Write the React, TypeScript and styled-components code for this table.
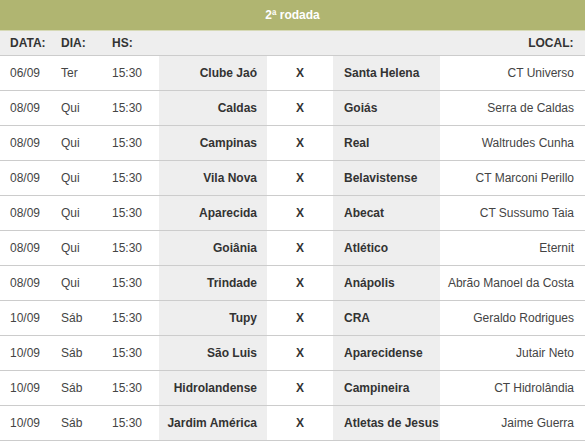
import React from "react";
import styled, { createGlobalStyle } from "styled-components";

const Global = createGlobalStyle`
  html, body { margin: 0; padding: 0; background: #fff; }
  body { font-family: "Liberation Sans", Arial, sans-serif; }
`;

const Table = styled.table`
  width: 585px;
  border-collapse: collapse;
  table-layout: fixed;
  font-family: "Liberation Sans", Arial, sans-serif;
  font-size: 12px;
  color: #333;
`;

const TitleCell = styled.th`
  height: 30px;
  padding: 0;
  background: #b0b571;
  color: #fff;
  font-weight: bold;
  text-align: center;
  border-bottom: 1px solid #d6d9b6;
`;

const HeadRow = styled.tr`
  background: #eee;
`;

const HeadCell = styled.th<{ $align?: string; $pad?: string; $edge?: boolean }>`
  height: 24px;
  padding: ${(p) => p.$pad || "0 0 0 10px"};
  text-align: ${(p) => p.$align || "left"};
  font-weight: bold;
  color: #333;
  border-bottom: 1px solid #ccc;
  border-right: ${(p) => (p.$edge ? "1px solid #555" : "none")};
`;

const Row = styled.tr`
  border-bottom: 1px solid #ccc;
`;

const Cell = styled.td<{ $align?: string; $pad?: string; $bold?: boolean; $shade?: boolean }>`
  height: 34px;
  padding: ${(p) => p.$pad || "0 0 0 10px"};
  text-align: ${(p) => p.$align || "left"};
  font-weight: ${(p) => (p.$bold ? "bold" : "normal")};
  background: ${(p) => (p.$shade ? "#eee" : "transparent")};
  color: ${(p) => (p.$bold ? "#333" : "#444")};
  white-space: nowrap;
  overflow: hidden;
`;

type Game = [string, string, string, string, string, string];

const games: Game[] = [
  ["06/09", "Ter", "15:30", "Clube Jaó", "Santa Helena", "CT Universo"],
  ["08/09", "Qui", "15:30", "Caldas", "Goiás", "Serra de Caldas"],
  ["08/09", "Qui", "15:30", "Campinas", "Real", "Waltrudes Cunha"],
  ["08/09", "Qui", "15:30", "Vila Nova", "Belavistense", "CT Marconi Perillo"],
  ["08/09", "Qui", "15:30", "Aparecida", "Abecat", "CT Sussumo Taia"],
  ["08/09", "Qui", "15:30", "Goiânia", "Atlético", "Eternit"],
  ["08/09", "Qui", "15:30", "Trindade", "Anápolis", "Abrão Manoel da Costa"],
  ["10/09", "Sáb", "15:30", "Tupy", "CRA", "Geraldo Rodrigues"],
  ["10/09", "Sáb", "15:30", "São Luis", "Aparecidense", "Jutair Neto"],
  ["10/09", "Sáb", "15:30", "Hidrolandense", "Campineira", "CT Hidrolândia"],
  ["10/09", "Sáb", "15:30", "Jardim América", "Atletas de Jesus", "Jaime Guerra"],
];

export default function App() {
  return (
    <>
      <Global />
      <Table>
        <colgroup>
          <col style={{ width: 51 }} />
          <col style={{ width: 51 }} />
          <col style={{ width: 57 }} />
          <col style={{ width: 108 }} />
          <col style={{ width: 66 }} />
          <col style={{ width: 107 }} />
          <col style={{ width: 145 }} />
        </colgroup>
        <thead>
          <tr>
            <TitleCell colSpan={7}>2ª rodada</TitleCell>
          </tr>
          <HeadRow>
            <HeadCell>DATA:</HeadCell>
            <HeadCell>DIA:</HeadCell>
            <HeadCell>HS:</HeadCell>
            <HeadCell />
            <HeadCell />
            <HeadCell />
            <HeadCell $align="right" $pad="0 11px 0 0" $edge>
              LOCAL:
            </HeadCell>
          </HeadRow>
        </thead>
        <tbody>
          {games.map((g, i) => (
            <Row key={i}>
              <Cell>{g[0]}</Cell>
              <Cell>{g[1]}</Cell>
              <Cell>{g[2]}</Cell>
              <Cell $shade $bold $align="right" $pad="0 10px 0 0">
                {g[3]}
              </Cell>
              <Cell $bold $align="center" $pad="0">
                X
              </Cell>
              <Cell $shade $bold $pad="0 0 0 11px">
                {g[4]}
              </Cell>
              <Cell $align="right" $pad="0 11px 0 0">
                {g[5]}
              </Cell>
            </Row>
          ))}
        </tbody>
      </Table>
    </>
  );
}
